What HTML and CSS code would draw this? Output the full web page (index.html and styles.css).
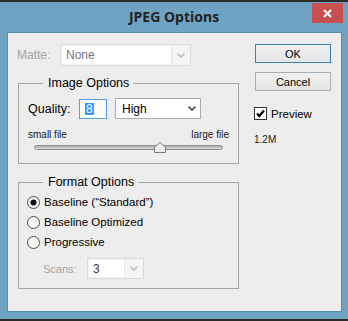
FILE: index.html
```html
<!DOCTYPE html>
<html lang="en">
<head>
    <meta charset="UTF-8">
    <meta name="viewport" content="width=device-width, initial-scale=1.0">
    <title>JPEG Options</title>
    <link rel="stylesheet" href="styles.css">
</head>
<body>
    <div class="window">
        <div class="edge"></div>
        <div class="titlebar">
            <span></span>
            <h1 class="title">JPEG Options</h1>
            <button class="close" aria-label="Close">
                <svg width="9" height="9" viewBox="0 0 9 9"><path d="M1 1 8 8M8 1 1 8" stroke="#fff" stroke-width="2"/></svg>
            </button>
        </div>

        <div class="panel">
            <div class="main">
                <div class="matte-row">
                    <span class="label disabled">Matte:</span>
                    <div class="combo disabled-combo matte-combo">
                        <span class="combo-value">None</span>
                        <span class="combo-arrow">
                            <svg width="8" height="5" viewBox="0 0 8 5"><path d="M.6.6 4 4 7.4.6" fill="none" stroke="#bdbdbd" stroke-width="1.6"/></svg>
                        </span>
                    </div>
                </div>

                <fieldset class="group image-group">
                    <legend>Image Options</legend>
                    <div class="quality-row">
                        <span class="label quality-label">Quality:</span>
                        <div class="quality-input"><span class="selected">8</span></div>
                        <div class="select high-select">
                            <span>High</span>
                            <svg width="8" height="5" viewBox="0 0 8 5"><path d="M.6.6 4 4 7.4.6" fill="none" stroke="#444" stroke-width="1.6"/></svg>
                        </div>
                    </div>
                    <div class="size-labels">
                        <span>small file</span>
                        <span>large file</span>
                    </div>
                    <div class="slider">
                        <div class="track"></div>
                        <svg class="thumb" width="12" height="11" viewBox="0 0 12 11"><path d="M.5 10.5V5L6 .5 11.5 5v5.5z" fill="#f0f0f0" stroke="#7a7a7a"/></svg>
                    </div>
                </fieldset>

                <fieldset class="group format-group">
                    <legend>Format Options</legend>
                    <label class="radio-row">
                        <svg width="13" height="13" viewBox="0 0 13 13"><circle cx="6.5" cy="6.5" r="6" fill="#f6f6f6" stroke="#4d4d4d"/><circle cx="6.5" cy="6.5" r="3" fill="#111"/></svg>
                        <span>Baseline (“Standard”)</span>
                    </label>
                    <label class="radio-row">
                        <svg width="13" height="13" viewBox="0 0 13 13"><circle cx="6.5" cy="6.5" r="6" fill="#f6f6f6" stroke="#4d4d4d"/></svg>
                        <span>Baseline Optimized</span>
                    </label>
                    <label class="radio-row">
                        <svg width="13" height="13" viewBox="0 0 13 13"><circle cx="6.5" cy="6.5" r="6" fill="#f6f6f6" stroke="#4d4d4d"/></svg>
                        <span>Progressive</span>
                    </label>
                    <div class="scans-row">
                        <span class="label disabled scans-label">Scans:</span>
                        <div class="combo disabled-combo scans-combo">
                            <span class="combo-value">3</span>
                            <span class="combo-arrow">
                                <svg width="8" height="5" viewBox="0 0 8 5"><path d="M.6.6 4 4 7.4.6" fill="none" stroke="#bdbdbd" stroke-width="1.6"/></svg>
                            </span>
                        </div>
                    </div>
                </fieldset>
            </div>

            <div class="side">
                <button class="btn btn-default">OK</button>
                <button class="btn">Cancel</button>
                <label class="check-row">
                    <svg width="13" height="13" viewBox="0 0 13 13"><rect x=".5" y=".5" width="12" height="12" fill="#fff" stroke="#333"/><path d="M3 6.5 5.3 9 10 3.5" fill="none" stroke="#000" stroke-width="2.2"/></svg>
                    <span>Preview</span>
                </label>
                <div class="file-size">1.2M</div>
            </div>
        </div>

        <div class="gap"></div>
        <div class="edge"></div>
    </div>
</body>
</html>
```

FILE: styles.css
```css
body {
    margin: 0;
    background: #6fa3c4;
    font-family: 'Liberation Sans', Arial, sans-serif;
    color: #000;
}

.window {
    width: 348px;
    height: 321px;
    display: flex;
    flex-direction: column;
}

.edge {
    height: 2px;
    background: #2b2b2b;
}

.titlebar {
    height: 30px;
    display: grid;
    grid-template-columns: 1fr auto 1fr;
}

.title {
    margin: 0;
    font-family: 'Open Sans', sans-serif;
    font-weight: 700;
    font-size: 14px;
    line-height: 30px;
    color: #222;
}

.close {
    justify-self: end;
    align-self: start;
    width: 31px;
    height: 20px;
    margin: 1px 5px 0 0;
    padding: 0;
    border: 0;
    background: #c75050;
    display: flex;
    align-items: center;
    justify-content: center;
}

.panel {
    box-sizing: border-box;
    height: 280px;
    width: 335px;
    margin-left: 7px;
    border: 1px solid #5d8cac;
    background: #ededed;
    padding: 11px 0 0 9px;
    display: flex;
    gap: 16px;
}

.main {
    width: 222px;
}

.label {
    font-size: 12px;
}

.disabled {
    color: #a3a3a3;
}

.matte-row {
    display: flex;
    align-items: center;
    height: 22px;
}

.matte-row .label {
    width: 43px;
}

/* disabled combo boxes */
.combo {
    box-sizing: border-box;
    display: flex;
    border: 1px solid #d9d9d9;
    background: #f4f4f4;
    padding: 1px;
}

.combo-value {
    flex: 1;
    background: #fff;
    border-right: 1px solid #e6e6e6;
    font-size: 12px;
    display: flex;
    align-items: center;
    padding-left: 4px;
}

.combo-arrow {
    width: 17px;
    display: flex;
    align-items: center;
    justify-content: center;
}

.matte-combo {
    width: 131px;
    height: 22px;
}

.matte-combo .combo-value {
    color: #77778a;
}

.scans-combo {
    width: 57px;
    height: 21px;
}

.scans-combo .combo-value {
    color: #3a3a3a;
}

/* group boxes */
.group {
    box-sizing: border-box;
    width: 221px;
    margin: 9px 0 0 1px;
    border: 1px solid #a3a3a3;
    padding: 7px 9px 11px 9px;
}

.group legend {
    margin-left: 15px;
    padding: 0 4px 0 5px;
    font-size: 12.5px;
    line-height: 16px;
}

.quality-row {
    display: flex;
    align-items: center;
    height: 21px;
}

.quality-label {
    width: 51px;
    font-size: 12.5px;
}

.quality-input {
    box-sizing: border-box;
    width: 28px;
    height: 20px;
    border: 1px solid #569de5;
    background: #fff;
    padding-left: 5px;
    display: flex;
    align-items: center;
}

.selected {
    background: #3399ff;
    color: #fff;
    font-size: 12px;
    line-height: 12px;
    padding: 0 1px;
}

.select {
    box-sizing: border-box;
    width: 86px;
    height: 21px;
    margin-left: 8px;
    border: 1px solid #acacac;
    background: #fff;
    display: flex;
    align-items: center;
    justify-content: space-between;
    padding: 0 4px 0 6px;
    font-size: 12px;
}

.size-labels {
    display: flex;
    justify-content: space-between;
    margin-top: 10px;
    font-size: 10px;
    line-height: 12px;
    color: #1a1a1a;
}

.slider {
    position: relative;
    height: 10px;
    margin: 1px 6px 0 6px;
    display: flex;
    align-items: center;
}

.track {
    box-sizing: border-box;
    flex: 1;
    height: 5px;
    border: 1px solid #8e8e8e;
    border-radius: 3px;
    background: linear-gradient(#a9a9a9, #dedede);
}

.thumb {
    position: absolute;
    left: 120px;
    top: 0;
}

.format-group {
    margin-top: 10px;
    padding: 2px 8px 9px 8px;
}

.format-group legend {
    margin-left: 16px;
}

.radio-row {
    display: flex;
    align-items: center;
    gap: 4px;
    height: 20px;
    font-size: 11.5px;
}

.scans-row {
    display: flex;
    align-items: center;
    margin-top: 6px;
    padding-left: 16px;
}

.scans-label {
    width: 44px;
    font-size: 11px;
}

/* right column */
.side {
    width: 76px;
    display: flex;
    flex-direction: column;
}

.btn {
    box-sizing: border-box;
    height: 19px;
    padding: 0;
    border: 1px solid #acacac;
    background: linear-gradient(#f0f0f0, #e5e5e5);
    font-family: 'Liberation Sans', Arial, sans-serif;
    font-size: 11px;
    color: #000;
}

.btn + .btn {
    margin-top: 9px;
}

.btn-default {
    border-color: #3c7fb1;
}

.check-row {
    display: flex;
    align-items: center;
    gap: 4px;
    margin: 16px 0 0 -1px;
    font-size: 11.5px;
}

.file-size {
    margin: 14px 0 0 -1px;
    font-size: 10px;
    line-height: 12px;
    color: #1a1a1a;
}

.gap {
    flex: 1;
}
```
